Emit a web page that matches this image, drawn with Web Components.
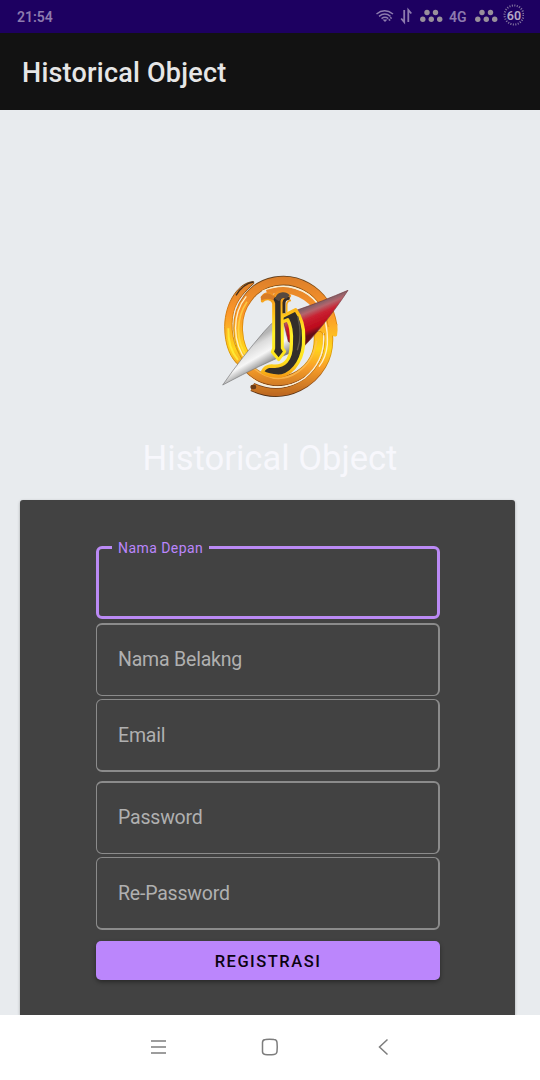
<!DOCTYPE html>
<html lang="id">
<head>
<meta charset="utf-8">
<title>Historical Object</title>
<style>
body { margin: 0; font-family: Roboto, "Liberation Sans", sans-serif; background: #e8ebee; }
</style>
</head>
<body>
<history-app></history-app>
<script>
const define = (name, html) => {
  const t = document.createElement('template');
  t.innerHTML = html;
  customElements.define(name, class extends HTMLElement {
    constructor() {
      super();
      this.attachShadow({ mode: 'open' }).appendChild(t.content.cloneNode(true));
    }
  });
};

define('status-bar', `
<style>
:host { display: flex; box-sizing: border-box; height: 33px; padding: 0 16px 0 17px; background: #1d0061; color: #8d7bae; align-items: center; justify-content: space-between; font-size: 14px; font-weight: 600; flex: none; }
svg { display: block; flex: none; }
time { line-height: 16px; padding-top: 1px; }
.icons { display: flex; align-items: center; }
.net { width: 18px; margin: 0 8px 0 6px; line-height: 16px; }
</style>
<time>21:54</time>
<div class="icons">
<svg width="67" height="33" viewBox="376 0 67 33">
  <g fill="none" stroke="#8d7bae" stroke-width="1.500">
    <path d="M376.500 14Q384.500 7.500 393 14M379 16.300Q384.800 11.800 390.500 16.300M381.500 18.600Q385 16 388.300 18.600"/>
    <path d="M389 20.500l3-4" stroke-width="2" stroke-dasharray="1.500 1"/>
    <path d="M404.200 10v12l-3-3.500M408.300 22V10l3 3.500" stroke-width="1.800"/>
  </g>
  <path d="M382.500 19.500h5L385 22z" fill="#8d7bae"/>
  <g fill="#99909b"><circle cx="427" cy="12.500" r="2.700"/><circle cx="435.500" cy="12.500" r="2.700"/><circle cx="422.800" cy="19.300" r="2.700"/><circle cx="431.300" cy="19.300" r="2.700"/><circle cx="439.700" cy="19.300" r="2.700"/></g>
</svg>
<span class="net">4G</span>
<svg width="49" height="33" viewBox="475 0 49 33">
  <g fill="#99909b"><circle cx="482" cy="12.500" r="2.700"/><circle cx="490.500" cy="12.500" r="2.700"/><circle cx="477.800" cy="19.300" r="2.700"/><circle cx="486.300" cy="19.300" r="2.700"/><circle cx="494.700" cy="19.300" r="2.700"/></g>
  <circle cx="514" cy="15" r="9.500" fill="none" stroke="#81729f" stroke-width="2" stroke-dasharray="1.100 1.387"/>
  <text x="514" y="19.500" font-size="12.500" font-weight="600" text-anchor="middle" fill="#b3a8c4">60</text>
</svg>
</div>`);

define('app-bar', `
<style>
:host { display: flex; align-items: center; box-sizing: border-box; height: 77px; padding: 2px 22px 0; background: #121212; color: #e6e6e6; font-size: 27px; font-weight: 500; letter-spacing: .22px; flex: none; }
</style><slot></slot>`);

define('compass-logo', `
<style>:host { display: block; width: 150px; height: 145px; } svg { display: block; }</style>
<svg width="150" height="145" viewBox="0 0 450 435">
  <defs>
    <linearGradient id="r" x1="0" y1="35" x2="0" y2="395" gradientUnits="userSpaceOnUse"><stop offset="0" stop-color="#dc7f2c"/><stop offset=".3" stop-color="#fb962c"/><stop offset=".6" stop-color="#ffd51c"/><stop offset=".75" stop-color="#f9a02a"/><stop offset="1" stop-color="#b96522"/></linearGradient>
    <linearGradient id="e" x1="0" y1="35" x2="0" y2="395" gradientUnits="userSpaceOnUse"><stop offset="0" stop-color="#5b3b1c"/><stop offset=".25" stop-color="#d8780f"/><stop offset=".65" stop-color="#dd9c04"/><stop offset=".85" stop-color="#a2561a"/><stop offset="1" stop-color="#4b2b12"/></linearGradient>
    <linearGradient id="red" x1="315" y1="115" x2="347" y2="190" gradientUnits="userSpaceOnUse"><stop offset="0" stop-color="#7b6066"/><stop offset=".2" stop-color="#b4646c"/><stop offset=".42" stop-color="#c92232"/><stop offset=".8" stop-color="#bd091c"/><stop offset="1" stop-color="#641019"/></linearGradient>
    <linearGradient id="sil" x1="115" y1="235" x2="165" y2="320" gradientUnits="userSpaceOnUse"><stop offset="0" stop-color="#b5b5b5"/><stop offset=".18" stop-color="#dcdcdc"/><stop offset=".5" stop-color="#f6f6f6"/><stop offset=".75" stop-color="#aaa"/><stop offset="1" stop-color="#484848"/></linearGradient>
    <linearGradient id="y" x1="0" y1="75" x2="0" y2="335" gradientUnits="userSpaceOnUse"><stop offset="0" stop-color="#ef8a22"/><stop offset=".27" stop-color="#ffc018"/><stop offset=".5" stop-color="#fff127"/><stop offset=".82" stop-color="#ffe21c"/><stop offset="1" stop-color="#f59b18"/></linearGradient>
    <filter id="soft"><feGaussianBlur stdDeviation="1.300"/></filter>
  </defs>
  <g filter="url(#soft)">
  <path d="M131 50C88 50 45 110 44 185C44 240 61 281 90 304L98 284C69 246 59 184 71 139C80 104 109 75 131 56Z" fill="url(#r)" stroke="url(#e)" stroke-width="3"/>
  <path d="M130 51C110 54 91 70 78 91" fill="none" stroke="#45311c" stroke-width="4"/>
  <g fill="none">
    <path d="M127 366Q199 399 266 366Q311 344 336 301C362 258 363 196 339 136" stroke="url(#e)" stroke-width="27"/>
    <path d="M127 366Q199 399 266 366Q311 344 336 301C362 258 363 196 339 136" stroke="url(#r)" stroke-width="22"/>
    <path d="M132 366h-4" stroke="#6b3b19" stroke-width="14" stroke-linecap="round"/>
    <path d="M120 292C76 240 72 152 112 101C153 43 232 32 291 66C335 91 360 133 368 183" stroke="url(#e)" stroke-width="29"/>
    <path d="M120 292C76 240 72 152 112 101C153 43 232 32 291 66C335 91 360 133 368 183" stroke="url(#r)" stroke-width="24"/>
    <path d="M354 174Q363 193 366 211Q373 218 381 212Q384 195 382 178Z" fill="url(#r)"/>
    <path d="M170 82C228 63 284 84 315 123C333 149 338 174 338 205" stroke="url(#r)" stroke-width="19"/>
    <path d="M157 78C224 48 291 69 325 119C346 151 354 188 352 239Q348 279 327 305" stroke="#fff0cb" stroke-width="4"/>
    <path d="M110 302C151 355 218 360 268 330C312 302 329 259 326 212" stroke="url(#e)" stroke-width="30" stroke-linecap="round"/>
    <path d="M110 302C151 355 218 360 268 330C312 302 329 259 326 212" stroke="url(#r)" stroke-width="25" stroke-linecap="round"/>
    <path d="M119 336C169 376 236 374 284 339C329 302 343 258 341 211" stroke="#fff0d2" stroke-width="4"/>
    <path d="M111 289C65 233 66 146 109 94" stroke="#fff0c4" stroke-width="4"/>
    <path d="M111 110C78 160 76 226 111 276" stroke="#ffe54c" stroke-width="5" opacity=".65"/>
    <path d="M55 190Q53 249 84 285" stroke="#fff03c" stroke-width="6" opacity=".8"/>
    <path d="M128 307Q198 365 263 321Q311 289 320 227" stroke="#ffc057" stroke-width="5" opacity=".7"/>
  </g>
  <path d="M38 360C77 303 119 250 163 199Q182 175 208 158L280 242Q262 257 226 270Q164 293 38 360Z" fill="url(#sil)" stroke="#777779" stroke-width="2"/>
  <path d="M414 76C366 96 310 119 256 137L218 158L235 230L275 251C323 203 370 143 414 76Z" fill="url(#red)" stroke="#74363d" stroke-width="2"/>
  <g stroke-linejoin="round">
    <path d="M233 164L209 174V158L257 134Q283 170 281 219C283 276 255 322 214 333Q178 335 157 321Q165 303 185 303C223 308 244 285 244 237Q247 188 233 164Z" fill="#302e2b" stroke="url(#y)" stroke-width="10"/>
    <path d="M157 97Q164 84 182 87Q187 94 194 93Q202 78 219 81Q232 81 239 93L231 101Q220 96 216 108L217 249L224 260L206 284L187 261L191 250V116Q188 103 175 101Q163 100 157 108Z" fill="#302e2b" stroke="url(#y)" stroke-width="9"/>
    <path d="M222 145V113Q223 101 239 99" fill="none" stroke="#352a20" stroke-width="9"/>
    <path d="M230 143V119Q231 107 243 106" fill="none" stroke="url(#y)" stroke-width="5"/>
    <path d="M263 154Q278 211 262 256" fill="none" stroke="#5d574b" stroke-width="4"/>
    <path d="M152 96Q164 82 180 87Q188 94 195 93L190 106Q174 97 154 106Z" fill="#d77b27"/>
    <path d="M195 101Q204 80 220 82Q232 82 239 91L229 101Q216 94 207 109Z" fill="#564a40"/>
  </g>
  </g>
</svg>`);

define('text-field', `
<style>
:host { display: block; position: relative; box-sizing: border-box; height: 73px; padding: 0 20px 0 21px; border: solid #8b8b8b; border-width: 2px 2px 1px 1px; border-radius: 6px; color: #b0b0b0; font-size: 19.500px; letter-spacing: -.2px; line-height: 69px; }
:host([low]) { border-width: 1px 2px 2px 1px; line-height: 71px; }
:host([focused]) { border: 3px solid #bb8af5; color: #bb86fc; letter-spacing: .44px; }
:host([focused]) span { position: absolute; left: 13px; top: -9px; padding: 0 6px; background: #424242; font-size: 14px; line-height: 16px; white-space: nowrap; }
</style><span><slot></slot></span>`);

define('action-button', `
<style>
:host { display: block; } 
button { display: block; width: 100%; height: 39px; padding: 2px 0 0; border: 0; border-radius: 5px; background: #bb86fc; color: #0b0311; font: 500 16.500px/37px Roboto, sans-serif; letter-spacing: 1.500px; box-shadow: 0 2px 4px rgba(0,0,0,.4); }
</style><button type="button"><slot></slot></button>`);

define('form-card', `
<style>
:host { display: flex; flex-direction: column; box-sizing: border-box; flex: 1; margin: 0 25px 0 20px; padding: 46px 75px 0 76px; background: #424242; border-radius: 3px 3px 0 0; box-shadow: 0 1px 3px rgba(0,0,0,.3); }
</style><slot></slot>`);

define('nav-bar', `
<style>
:host { display: flex; height: 65px; background: #fff; flex: none; align-items: center; padding-left: 148px; gap: 90px; }
svg { display: block; fill: none; stroke: #7d7d7d; stroke-width: 1.500; }
</style>
<svg width="22" height="22"><path d="M3 4h15M3 10h15M3 16h15"/></svg>
<svg width="22" height="22"><path d="M5.500 2.500Q9.500 1.800 14 2.500Q16.700 2.500 17 5.500Q17.500 10 17 14.500Q16.700 17.200 14 17.500Q9.500 18 5 17.500Q2.500 17.200 2.500 14.500V5.500Q2.500 2.700 5.500 2.500Z"/></svg>
<svg width="22" height="22"><path d="M15.500 2.500L7.500 10L15.500 17.500"/></svg>`);

define('history-app', `
<style>
:host { display: flex; flex-direction: column; height: 1080px; overflow: hidden; background: #e8ebee; }
main { flex: 1; min-height: 0; display: flex; flex-direction: column; overflow: hidden; }
compass-logo { margin: 155px 0 0 210px; flex: none; }
h1 { margin: 27px 0 0; height: 63px; text-align: center; font-size: 34.600px; font-weight: 400; line-height: 42px; color: #f7f7fc; flex: none; }
</style>
<status-bar></status-bar>
<app-bar>Historical Object</app-bar>
<main>
  <compass-logo></compass-logo>
  <h1>Historical Object</h1>
  <form-card>
    <text-field focused>Nama Depan</text-field>
    <text-field style="margin-top:4px">Nama Belakng</text-field>
    <text-field low style="margin-top:3px">Email</text-field>
    <text-field style="margin-top:9px">Password</text-field>
    <text-field low style="margin-top:3px">Re-Password</text-field>
    <action-button style="margin-top:11px">REGISTRASI</action-button>
  </form-card>
</main>
<nav-bar></nav-bar>`);
</script>
</body>
</html>
